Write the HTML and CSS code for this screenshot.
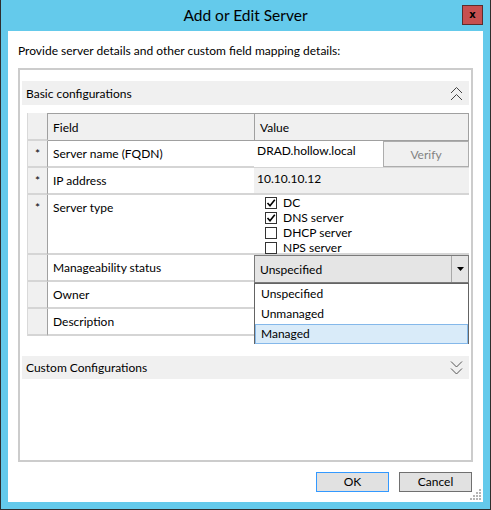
FILE: index.html
```html
<!DOCTYPE html>
<html>
<head>
<meta charset="utf-8">
<link rel="stylesheet" href="styles.css">
</head>
<body>
<div class="window">
  <div class="titlebar">
    <span class="spacer"></span>
    <div class="title">Add or Edit Server</div>
    <div class="close">x</div>
  </div>
  <div class="client">
    <p class="intro">Provide server details and other custom field mapping details:</p>
    <div class="group">
      <div class="section-head">
        <span>Basic configurations</span>
        <svg class="chev" width="13" height="15" viewBox="0 0 13 15"><path d="M1 7 L6.5 1.5 L12 7 M1 14 L6.5 8.5 L12 14" fill="none" stroke="#444" stroke-width="1"/></svg>
      </div>
      <div class="table">
        <div class="ind hdr-ind"></div>
        <div class="hd hd-field">Field</div>
        <div class="hd hd-value">Value</div>

        <div class="ind">*</div>
        <div class="fld">Server name (FQDN)</div>
        <div class="val val-name">
          <div class="textbox">DRAD.hollow.local</div>
          <div class="verify">Verify</div>
        </div>

        <div class="ind">*</div>
        <div class="fld">IP address</div>
        <div class="val val-ip">10.10.10.12</div>

        <div class="ind">*</div>
        <div class="fld">Server type</div>
        <div class="val val-type">
          <div class="check"><span class="box"><svg width="10" height="10" viewBox="0 0 10 10"><path d="M1.5 5 L4 7.8 L8.8 1.8" fill="none" stroke="#000" stroke-width="1.6"/></svg></span>DC</div>
          <div class="check"><span class="box"><svg width="10" height="10" viewBox="0 0 10 10"><path d="M1.5 5 L4 7.8 L8.8 1.8" fill="none" stroke="#000" stroke-width="1.6"/></svg></span>DNS server</div>
          <div class="check"><span class="box"></span>DHCP server</div>
          <div class="check"><span class="box"></span>NPS server</div>
        </div>

        <div class="ind"></div>
        <div class="fld">Manageability status</div>
        <div class="val val-combo">
          <div class="combo">
            <span class="combo-text">Unspecified</span>
            <span class="combo-btn"><svg width="7" height="4" viewBox="0 0 7 4"><path d="M0 0 H7 L3.5 4 Z" fill="#000"/></svg></span>
          </div>
          <div class="dropdown">
            <div class="item">Unspecified</div>
            <div class="item">Unmanaged</div>
            <div class="item selected">Managed</div>
          </div>
        </div>

        <div class="ind"></div>
        <div class="fld">Owner</div>
        <div class="val"></div>

        <div class="ind"></div>
        <div class="fld">Description</div>
        <div class="val"></div>
      </div>
      <div class="section-head custom">
        <span>Custom Configurations</span>
        <svg class="chev" width="13" height="15" viewBox="0 0 13 15"><path d="M1 1.5 L6.5 7 L12 1.5 M1 8.5 L6.5 14 L12 8.5" fill="none" stroke="#555" stroke-width="1"/></svg>
      </div>
    </div>
    <div class="buttons">
      <button class="btn default">OK</button>
      <button class="btn">Cancel</button>
    </div>
    <svg class="grip" width="12" height="12" viewBox="0 0 12 12">
      <rect x="10" y="1" width="2" height="2" fill="#b5b5b5"/>
      <rect x="7" y="4" width="2" height="2" fill="#b5b5b5"/>
      <rect x="10" y="4" width="2" height="2" fill="#b5b5b5"/>
      <rect x="4" y="7" width="2" height="2" fill="#b5b5b5"/>
      <rect x="7" y="7" width="2" height="2" fill="#b5b5b5"/>
      <rect x="10" y="7" width="2" height="2" fill="#b5b5b5"/>
      <rect x="1" y="10" width="2" height="2" fill="#b5b5b5"/>
      <rect x="4" y="10" width="2" height="2" fill="#b5b5b5"/>
      <rect x="7" y="10" width="2" height="2" fill="#b5b5b5"/>
      <rect x="10" y="10" width="2" height="2" fill="#b5b5b5"/>
    </svg>
  </div>
</div>
</body>
</html>
```

FILE: styles.css
```css
* { box-sizing: border-box; }
html, body { margin: 0; padding: 0; }
body {
  font-family: Lato, "Open Sans", sans-serif;
  font-size: 12px;
  color: #000;
  background: #fff;
}
.window {
  width: 491px;
  height: 510px;
  background: #64caeb;
  border: 1px solid #2e2e2e;
  border-top: 0;
  padding: 0 7px 7px 7px;
  display: flex;
  flex-direction: column;
}
.titlebar {
  height: 31px;
  display: grid;
  grid-template-columns: 21px 1fr 21px;
  align-items: start;
}
.title {
  text-align: center;
  font-size: 15.5px;
  line-height: 20px;
  padding-top: 5px;
}
.close {
  margin-top: 5px;
  width: 21px;
  height: 20px;
  background: #c75050;
  border: 1px solid #5c2d2d;
  display: flex;
  align-items: center;
  justify-content: center;
  font: bold 10px "DejaVu Sans", sans-serif;
  color: #000;
  padding-bottom: 2px;
}
.client {
  flex: 1;
  background: #fff;
  position: relative;
  padding: 12px 10px 0 10px;
  display: flex;
  flex-direction: column;
}
.intro {
  margin: 0;
  line-height: 16px;
  height: 16px;
}
.group {
  margin-top: 9px;
  height: 394px;
  border: 2px solid #cccccc;
  padding: 11px 2px 0 2px;
  display: flex;
  flex-direction: column;
}
.section-head {
  height: 24px;
  background: #f0f0f0;
  display: flex;
  align-items: center;
  justify-content: space-between;
  padding: 0 6px 0 4px;
  flex-shrink: 0;
}
.section-head.custom {
  margin-top: 20px;
  height: 23px;
}
.chev { display: block; }
.table {
  margin: 8px 0 0 5px;
  width: 442px;
  display: grid;
  grid-template-columns: 20px 206px 215px;
  grid-template-rows: 28px 27px 27px 60px 27px 27px 27px;
  border-left: 1px solid #d9d9d9;
  flex-shrink: 0;
}
.ind {
  background: #f0f0f0;
  border-right: 1px solid #a0a0a0;
  border-bottom: 2px solid #d5d5d5;
  text-align: center;
  padding-top: 5px;
  line-height: 16px;
}
.hdr-ind { border-bottom: 2px solid #d5d5d5; }
.hd {
  background: #f0f0f0;
  border-top: 1px solid #a0a0a0;
  border-bottom: 1px solid #a0a0a0;
  padding-left: 5px;
  display: flex;
  align-items: center;
}
.hd-value {
  border-left: 1px solid #a0a0a0;
  border-right: 1px solid #a0a0a0;
  padding-left: 5px;
}
.fld {
  border-bottom: 2px solid #d5d5d5;
  padding: 5px 0 0 5px;
  line-height: 16px;
}
.val {
  border-bottom: 2px solid #d5d5d5;
}
.val-name {
  display: grid;
  grid-template-columns: 129px 86px;
  border-bottom: 1px solid #d5d5d5;
}
.textbox {
  background: #fff;
  padding: 2px 0 0 3px;
  line-height: 16px;
}
.verify {
  background: #f0f0f0;
  border: 1px solid #adadad;
  color: #838383;
  display: flex;
  align-items: center;
  justify-content: center;
}
.val-ip {
  background: #f0f0f0;
  padding: 3px 0 0 3px;
  line-height: 16px;
}
.val-type {
  padding: 0 0 0 11px;
}
.check {
  display: flex;
  align-items: center;
  height: 15px;
  line-height: 15px;
}
.box {
  width: 12px;
  height: 12px;
  border: 1px solid #333;
  background: #fff;
  margin-right: 6px;
  display: flex;
  align-items: center;
  justify-content: center;
}
.box svg { display: block; }
.val-combo {
  position: relative;
  border-bottom: 0;
}
.combo {
  height: 28px;
  background: #e5e5e5;
  border: 1px solid #7a7a7a;
  display: flex;
  align-items: center;
}
.combo-text {
  flex: 1;
  padding-left: 5px;
}
.combo-btn {
  width: 17px;
  height: 100%;
  border-left: 1px solid #a8a8a8;
  display: flex;
  align-items: center;
  justify-content: center;
}
.combo-btn svg { display: block; }
.dropdown {
  position: absolute;
  top: 28px;
  left: 0;
  width: 215px;
  height: 61px;
  background: #fff;
  border: 1px solid #646464;
  z-index: 2;
}
.item {
  height: 20px;
  line-height: 18px;
  padding-left: 5px;
  border: 1px solid transparent;
}
.item.selected {
  background: #d9ebf9;
  border-color: #84b8ea;
}
.buttons {
  display: flex;
  justify-content: flex-end;
  gap: 10px;
  margin-top: 10px;
  padding-right: 1px;
}
.btn {
  width: 73px;
  height: 20px;
  background: #e1e1e1;
  border: 1px solid #707070;
  font-family: Lato, "Open Sans", sans-serif;
  font-size: 12px;
  line-height: 18px;
  padding: 0;
  color: #000;
}
.btn.default { border-color: #3399ff; }
.grip {
  position: absolute;
  right: 2px;
  bottom: 2px;
  display: block;
}
```
